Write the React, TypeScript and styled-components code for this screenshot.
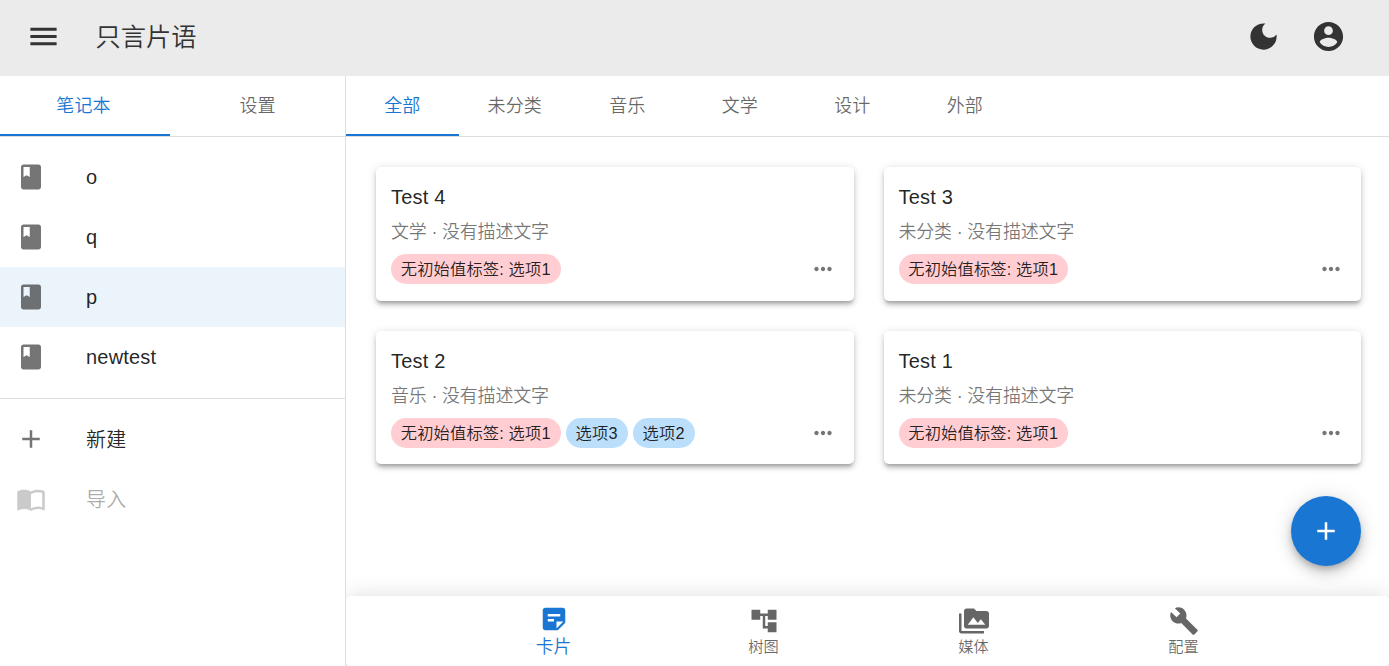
import React from 'react';
import styled, { createGlobalStyle } from 'styled-components';

const GlobalStyle = createGlobalStyle`
  *, *::before, *::after { box-sizing: border-box; }
  html, body, #root { height: 100%; }
  body {
    margin: 0;
    background: #fff;
    color: rgba(0, 0, 0, 0.87);
    font-family: 'Liberation Sans', 'Noto Sans CJK SC', sans-serif;
    font-weight: 350;
    overflow: hidden;
  }
  button { font: inherit; color: inherit; background: none; border: 0; padding: 0; margin: 0; }
`;

const paths = {
  menu: 'M3 18h18v-2H3v2zm0-5h18v-2H3v2zm0-7v2h18V6H3z',
  moon: 'M12 3c-4.97 0-9 4.03-9 9s4.03 9 9 9 9-4.03 9-9c0-.46-.04-.92-.1-1.36-.98 1.37-2.58 2.26-4.4 2.26-2.98 0-5.4-2.42-5.4-5.4 0-1.81.89-3.42 2.26-4.4-.44-.06-.9-.1-1.36-.1z',
  account:
    'M12 2C6.48 2 2 6.48 2 12s4.48 10 10 10 10-4.48 10-10S17.52 2 12 2zm0 3c1.66 0 3 1.34 3 3s-1.34 3-3 3-3-1.34-3-3 1.34-3 3-3zm0 14.2c-2.5 0-4.71-1.28-6-3.22.03-1.99 4-3.08 6-3.08 1.99 0 5.97 1.09 6 3.08-1.29 1.94-3.5 3.22-6 3.22z',
  book: 'M18 2H6c-1.1 0-2 .9-2 2v16c0 1.1.9 2 2 2h12c1.1 0 2-.9 2-2V4c0-1.1-.9-2-2-2zM6 4h5v8l-2.5-1.5L6 12V4z',
  add: 'M19 13h-6v6h-2v-6H5v-2h6V5h2v6h6v2z',
  contacts:
    'M21 5c-1.11-.35-2.33-.5-3.5-.5-1.95 0-4.05.4-5.5 1.5-1.45-1.1-3.55-1.5-5.5-1.5S2.45 4.9 1 6v14.65c0 .25.25.5.5.5.1 0 .15-.05.25-.05C3.1 20.45 5.05 20 6.5 20c1.95 0 4.05.4 5.5 1.5 1.35-.85 3.8-1.5 5.5-1.5 1.65 0 3.35.3 4.75 1.05.1.05.15.05.25.05.25 0 .5-.25.5-.5V6c-.6-.45-1.25-.75-2-1zm0 13.5c-1.1-.35-2.3-.5-3.5-.5-1.7 0-4.15.65-5.5 1.5V8c1.35-.85 3.8-1.5 5.5-1.5 1.2 0 2.4.15 3.5.5v11.5z',
  more: 'M6 10c-1.1 0-2 .9-2 2s.9 2 2 2 2-.9 2-2-.9-2-2-2zm12 0c-1.1 0-2 .9-2 2s.9 2 2 2 2-.9 2-2-.9-2-2-2zm-6 0c-1.1 0-2 .9-2 2s.9 2 2 2 2-.9 2-2-.9-2-2-2z',
  note: 'M19 3H4.99C3.89 3 3 3.9 3 5l.01 14c0 1.1.89 2 1.99 2h10l6-6V5c0-1.1-.9-2-2-2zM7 8h10v2H7V8zm5 6H7v-2h5v2zm2 5.5V14h5.5L14 19.5z',
  tree: 'M22 11V3h-7v3H9V3H2v8h7V8h2v10h4v3h7v-8h-7v3h-2V8h2v3z',
  media:
    'M2 6H0v5h.01L0 20c0 1.1.9 2 2 2h18v-2H2V6zm20-2h-8l-2-2H6c-1.1 0-1.99.9-1.99 2L4 16c0 1.1.9 2 2 2h16c1.1 0 2-.9 2-2V6c0-1.1-.9-2-2-2zM7 15l4.5-6 3.5 4.51 2.5-3.01L21 15H7z',
  build:
    'M22.7 19l-9.1-9.1c.9-2.3.4-5-1.5-6.9-2-2-5-2.4-7.4-1.3L9 6 6 9 1.6 4.7C.4 7.1.9 10.1 2.9 12.1c1.9 1.9 4.6 2.4 6.9 1.5l9.1 9.1c.4.4 1 .4 1.4 0l2.3-2.3c.5-.4.5-1.1.1-1.4z',
};

const Svg = styled.svg`
  display: block;
  flex: none;
  fill: currentColor;
`;

const Icon = ({ name, size = 30 }: { name: keyof typeof paths; size?: number }) => (
  <Svg viewBox="0 0 24 24" width={size} height={size}>
    <path d={paths[name]} />
  </Svg>
);

const Page = styled.div`
  height: 100vh;
  display: flex;
  flex-direction: column;
`;

const AppBar = styled.header`
  height: 76px;
  flex: none;
  display: flex;
  align-items: center;
  padding: 0 43px 3px 26px;
  background: #ebebeb;
  color: #333;
`;

const Title = styled.h1`
  flex: 1;
  margin: 0 0 0 34.5px;
  font-size: 25.25px;
  line-height: 40px;
  font-weight: inherit;
`;

const Actions = styled.div`
  display: flex;
  gap: 30px;
`;

const Body = styled.div`
  flex: 1;
  min-height: 0;
  display: flex;
`;

const Sidebar = styled.aside`
  width: 346px;
  flex: none;
  border-right: 1px solid #dedede;
`;

const Tabs = styled.div`
  display: flex;
  height: 61px;
  border-bottom: 1px solid #dedede;
`;

const Tab = styled.button<{ $active?: boolean; $width: number; $trim?: number }>`
  width: ${(p) => p.$width}px;
  flex: none;
  height: 60px;
  padding-top: 2px;
  padding-right: ${(p) => p.$trim ?? 0}px;
  padding-bottom: ${(p) => (p.$active ? 0 : 2)}px;
  border-bottom: ${(p) => (p.$active ? '2px solid #1976d2' : '0')};
  font-size: 18px;
  line-height: 22px;
  letter-spacing: 0.1px;
  color: ${(p) => (p.$active ? '#1976d2' : 'rgba(0, 0, 0, 0.6)')};
`;

const List = styled.ul<{ $divided?: boolean }>`
  list-style: none;
  margin: 0;
  padding: ${(p) => (p.$divided ? '10px 0 11px' : '10px 0')};
  border-bottom: ${(p) => (p.$divided ? '1px solid #dedede' : '0')};
`;

const ListItem = styled.li<{ $selected?: boolean; $disabled?: boolean }>`
  display: flex;
  align-items: center;
  gap: 40px;
  height: 60px;
  padding-left: 16px;
  font-size: 20px;
  letter-spacing: 0.19px;
  background: ${(p) => (p.$selected ? '#ebf3fb' : 'transparent')};
  opacity: ${(p) => (p.$disabled ? 0.38 : 1)};
  svg { color: rgba(0, 0, 0, 0.54); }
`;

const ActionLabel = styled.span`
  padding-bottom: 2px;
`;

const Main = styled.main`
  position: relative;
  flex: 1;
  min-width: 0;
  display: flex;
  flex-direction: column;
`;

const CardGrid = styled.section`
  flex: 1;
  display: grid;
  grid-template-columns: 1fr 1fr;
  grid-auto-rows: 133.5px;
  gap: 30px;
  padding: 30px 28px 0 30px;
`;

const Card = styled.article`
  padding: 15px;
  border-radius: 5px;
  background: #fff;
  box-shadow: 0 3.75px 3.75px -2.5px rgba(0, 0, 0, 0.2), 0 3.75px 5px rgba(0, 0, 0, 0.14),
    0 1.25px 10px rgba(0, 0, 0, 0.12);
`;

const CardTitle = styled.h2`
  margin: 0;
  font-size: 20px;
  line-height: 31px;
  font-weight: 400;
  letter-spacing: 0.19px;
`;

const CardText = styled.p`
  margin: 6px 0 9px;
  font-size: 18px;
  line-height: 26px;
  letter-spacing: -0.2px;
  color: rgba(0, 0, 0, 0.54);
`;

const CardFooter = styled.div`
  display: flex;
  justify-content: space-between;
  align-items: center;
  height: 30px;
  padding-right: 2.5px;
  color: rgba(0, 0, 0, 0.54);
`;

const Chips = styled.div`
  display: flex;
  gap: 5px;
`;

const Chip = styled.span<{ $tone: 'pink' | 'blue' }>`
  height: 30px;
  padding: 0 10.25px 0 9.75px;
  border-radius: 15px;
  font-size: 16.25px;
  line-height: 30px;
  letter-spacing: 0.16px;
  white-space: nowrap;
  color: rgba(0, 0, 0, 0.87);
  background: ${(p) => (p.$tone === 'pink' ? '#ffcdd2' : '#bbdefb')};
`;

const Fab = styled.button`
  position: absolute;
  right: 28px;
  bottom: 100px;
  width: 70px;
  height: 70px;
  display: flex;
  align-items: center;
  justify-content: center;
  border-radius: 50%;
  background: #1976d2;
  color: #fff;
  box-shadow: 0 3.75px 6.25px -1.25px rgba(0, 0, 0, 0.2), 0 7.5px 12.5px rgba(0, 0, 0, 0.14),
    0 1.25px 22.5px rgba(0, 0, 0, 0.12);
`;

const BottomNav = styled.nav`
  flex: none;
  display: flex;
  justify-content: center;
  height: 70px;
  padding-left: 2px;
  border-radius: 5px;
  background: #fff;
  box-shadow: 0 3px 26px rgba(0, 0, 0, 0.17);
  clip-path: inset(-40px 0 0 0);
`;

const NavItem = styled.button<{ $active?: boolean }>`
  width: 210px;
  display: flex;
  flex-direction: column;
  align-items: center;
  padding-top: ${(p) => (p.$active ? 8 : 10)}px;
  font-size: ${(p) => (p.$active ? 17.75 : 15.25)}px;
  line-height: ${(p) => (p.$active ? 26 : 22)}px;
  color: ${(p) => (p.$active ? '#1976d2' : 'rgba(0, 0, 0, 0.6)')};
`;

type Tag = { label: string; tone: 'pink' | 'blue' };
const pinkTag: Tag = { label: '无初始值标签: 选项1', tone: 'pink' };

const notebooks = ['o', 'q', 'p', 'newtest'];
const categories = ['全部', '未分类', '音乐', '文学', '设计', '外部'];
const cards: { title: string; category: string; tags: Tag[] }[] = [
  { title: 'Test 4', category: '文学', tags: [pinkTag] },
  { title: 'Test 3', category: '未分类', tags: [pinkTag] },
  {
    title: 'Test 2',
    category: '音乐',
    tags: [pinkTag, { label: '选项3', tone: 'blue' }, { label: '选项2', tone: 'blue' }],
  },
  { title: 'Test 1', category: '未分类', tags: [pinkTag] },
];
const navItems: { label: string; icon: keyof typeof paths }[] = [
  { label: '卡片', icon: 'note' },
  { label: '树图', icon: 'tree' },
  { label: '媒体', icon: 'media' },
  { label: '配置', icon: 'build' },
];

export default function App() {
  return (
    <Page>
      <GlobalStyle />
      <AppBar>
        <Icon name="menu" size={35} />
        <Title>只言片语</Title>
        <Actions>
          <Icon name="moon" size={35} />
          <Icon name="account" size={35} />
        </Actions>
      </AppBar>
      <Body>
        <Sidebar>
          <Tabs>
            <Tab $active $width={170} $trim={3}>笔记本</Tab>
            <Tab $width={175}>设置</Tab>
          </Tabs>
          <List $divided>
            {notebooks.map((name) => (
              <ListItem key={name} $selected={name === 'p'}>
                <Icon name="book" />
                {name}
              </ListItem>
            ))}
          </List>
          <List>
            <ListItem>
              <Icon name="add" />
              <ActionLabel>新建</ActionLabel>
            </ListItem>
            <ListItem $disabled>
              <Icon name="contacts" />
              <ActionLabel>导入</ActionLabel>
            </ListItem>
          </List>
        </Sidebar>
        <Main>
          <Tabs>
            {categories.map((name, i) => (
              <Tab key={name} $active={i === 0} $width={112.5}>
                {name}
              </Tab>
            ))}
          </Tabs>
          <CardGrid>
            {cards.map((card) => (
              <Card key={card.title}>
                <CardTitle>{card.title}</CardTitle>
                <CardText>{card.category} · 没有描述文字</CardText>
                <CardFooter>
                  <Chips>
                    {card.tags.map((tag) => (
                      <Chip key={tag.label} $tone={tag.tone}>
                        {tag.label}
                      </Chip>
                    ))}
                  </Chips>
                  <Icon name="more" size={26} />
                </CardFooter>
              </Card>
            ))}
          </CardGrid>
          <BottomNav>
            {navItems.map((item, i) => (
              <NavItem key={item.label} $active={i === 0}>
                <Icon name={item.icon} />
                {item.label}
              </NavItem>
            ))}
          </BottomNav>
          <Fab>
            <Icon name="add" />
          </Fab>
        </Main>
      </Body>
    </Page>
  );
}
